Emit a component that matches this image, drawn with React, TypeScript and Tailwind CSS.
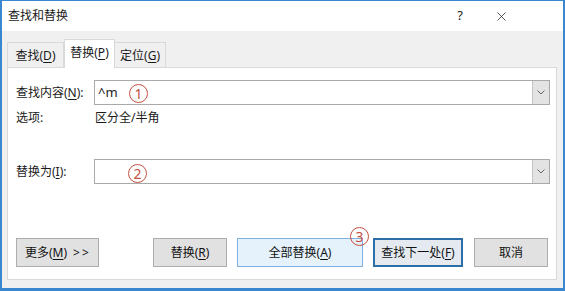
import { X } from "lucide-react";

const font = {
  fontFamily: '"Noto Sans", "Noto Sans CJK SC", sans-serif',
};

function Key({ k }: { k: string }) {
  return <span className="underline underline-offset-2">{k}</span>;
}

function Mark({ n, className }: { n: string; className: string }) {
  return (
    <span
      className={`absolute flex h-[19px] w-[19px] items-center justify-center rounded-full border border-[#c4503f] text-[14px] leading-none text-[#c4503f] ${className}`}
    >
      {n}
    </span>
  );
}

function Combo({ value }: { value?: string }) {
  return (
    <div className="flex h-[25px] flex-1 border border-[#a9a9a9] bg-white">
      <div className="flex flex-1 items-center pl-[3px] text-[13px] text-[#222]">
        {value}
      </div>
      <div className="flex w-[17px] items-center justify-center border-l border-[#c4c4c4] bg-[#e3e3e3]">
        <svg width="8" height="5" viewBox="0 0 8 5">
          <polyline
            points="0.5,0.5 4,4 7.5,0.5"
            fill="none"
            stroke="#666"
            strokeWidth="1"
          />
        </svg>
      </div>
    </div>
  );
}

function Btn({
  children,
  className,
}: {
  children: React.ReactNode;
  className: string;
}) {
  return (
    <button
      type="button"
      className={`flex h-[29px] items-center justify-center text-[12px] text-[#111] ${className}`}
    >
      {children}
    </button>
  );
}

export default function App() {
  return (
    <div
      style={font}
      className="flex h-[291px] w-[565px] flex-col border-x-2 border-b-[3px] border-t border-[#3a86cf] text-[12px] text-[#1a1a1a]"
    >
      <div className="flex h-[30px] items-center bg-white pl-[6px]">
        <span className="text-[12px]">查找和替换</span>
        <span className="ml-auto mr-[31px] text-[13px]">?</span>
        <X size={15} strokeWidth={1.2} className="mr-[54px] text-[#222]" />
      </div>

      <div className="flex flex-1 flex-col bg-[#f0f0f0] pl-[5px] pr-[6px] pt-[8px] pb-[8px]">
        <div className="relative z-10 flex h-[28px] items-end">
          <div className="flex h-[25px] w-[57px] items-center justify-center border border-b-0 border-[#d9d9d9] bg-[#f0f0f0] pt-[2px]">
            查找(<Key k="D" />)
          </div>
          <div className="-mb-px flex h-[29px] w-[51px] items-center justify-center border border-b-0 border-[#d9d9d9] bg-white pb-[2px]">
            替换(<Key k="P" />)
          </div>
          <div className="flex h-[25px] w-[51px] items-center justify-center border border-b-0 border-l-0 border-[#d9d9d9] bg-[#f0f0f0] pt-[2px]">
            定位(<Key k="G" />)
          </div>
        </div>

        <div className="flex flex-1 flex-col border border-[#d9d9d9] bg-white pl-[8px] pr-[6px] pt-[12px]">
          <div className="relative flex items-center">
            <div className="w-[78px]">
              查找内容(<Key k="N" />):
            </div>
            <Combo value="^m" />
            <Mark n="1" className="left-[113px] top-[4px]" />
          </div>

          <div className="mt-[5px] flex h-[16px] items-center">
            <div className="w-[79px]">选项:</div>
            <div>区分全/半角</div>
          </div>

          <div className="relative mt-[33px] flex items-center">
            <div className="w-[78px]">
              替换为(<Key k="I" />):
            </div>
            <Combo />
            <Mark n="2" className="left-[112px] top-[5px]" />
          </div>

          <div className="relative mt-[54px] flex items-center">
            <Btn className="w-[83px] justify-start border border-[#adadad] bg-[#e1e1e1] pl-[8px]">
              更多(<Key k="M" />) <span className="ml-[6px] tracking-[2px]">&gt;&gt;</span>
            </Btn>
            <Btn className="ml-[54px] w-[74px] border border-[#adadad] bg-[#e1e1e1]">
              替换(<Key k="R" />)
            </Btn>
            <Btn className="ml-[10px] w-[126px] border border-[#7fb1de] bg-[#e5f1fb]">
              全部替换(<Key k="A" />)
            </Btn>
            <Btn className="ml-[10px] w-[90px] border-2 border-[#2c6fa8] bg-[#e4eaf0]">
              查找下一处(<Key k="F" />)
            </Btn>
            <Btn className="ml-[11px] w-[74px] border border-[#adadad] bg-[#e1e1e1]">
              取消
            </Btn>
            <Mark n="3" className="left-[334px] -top-[11px] bg-transparent" />
          </div>
        </div>
      </div>
    </div>
  );
}
